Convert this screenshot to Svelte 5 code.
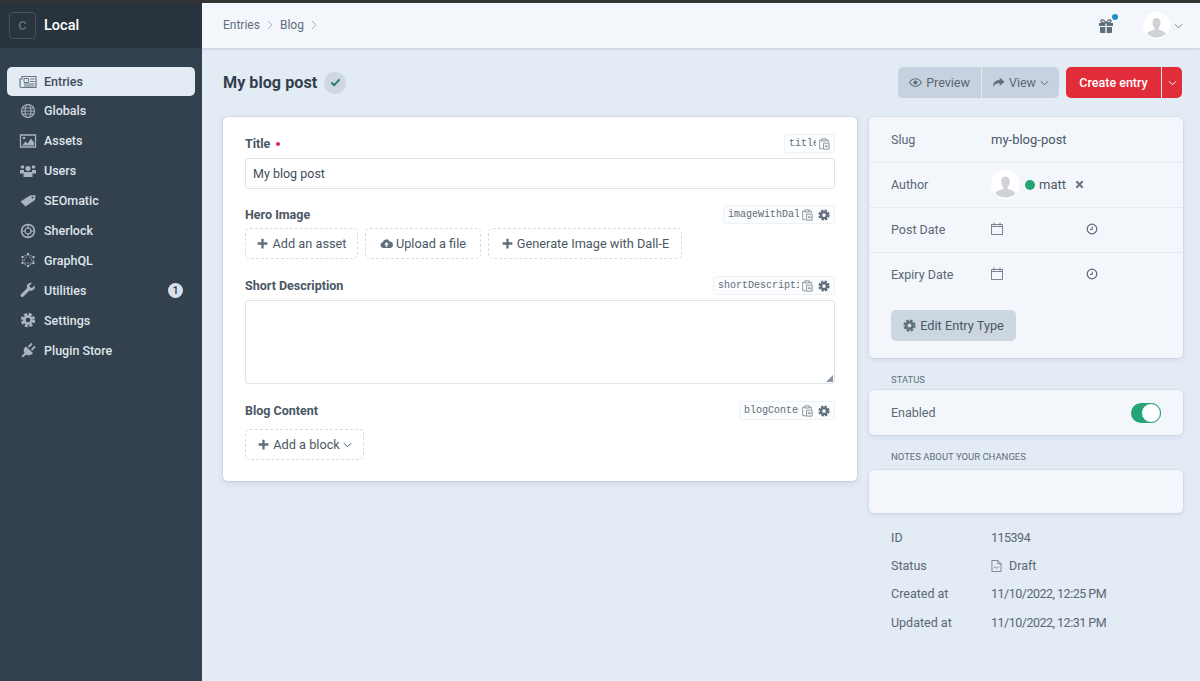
<script>
  const nav = [
    { label: 'Entries', icon: 'news', active: true },
    { label: 'Globals', icon: 'globe' },
    { label: 'Assets', icon: 'image' },
    { label: 'Users', icon: 'users' },
    { label: 'SEOmatic', icon: 'tag' },
    { label: 'Sherlock', icon: 'target' },
    { label: 'GraphQL', icon: 'graph' },
    { label: 'Utilities', icon: 'wrench', badge: 1 },
    { label: 'Settings', icon: 'cog' },
    { label: 'Plugin Store', icon: 'plug' }
  ];
  const meta = [
    { key: 'ID', value: '115394' },
    { key: 'Status', value: 'Draft', draft: true },
    { key: 'Created at', value: '11/10/2022, 12:25 PM' },
    { key: 'Updated at', value: '11/10/2022, 12:31 PM' }
  ];
</script>

{#snippet cog()}
  <svg class="i" viewBox="0 0 16 16"><circle cx="8" cy="8" r="4" fill="none" stroke="currentColor" stroke-width="3"/><circle cx="8" cy="8" r="6.2" fill="none" stroke="currentColor" stroke-width="2.6" stroke-dasharray="3.2 1.67"/></svg>
{/snippet}
{#snippet plus()}
  <svg class="i" viewBox="0 0 16 16"><path d="M6.6 2h2.8v4.6H14v2.8H9.400V14H6.600V9.400H2V6.600h4.600z" fill="currentColor"/></svg>
{/snippet}
{#snippet chevron()}
  <svg class="chev" viewBox="0 0 10 6"><path d="M1 1l4 4 4-4" fill="none" stroke="currentColor" stroke-width="1.1"/></svg>
{/snippet}
{#snippet clip()}
  <svg class="clip" viewBox="0 0 14 14"><path d="M4.500 2.500H2v10h3.500M9.500 2.500H12v2.500M4.500 1h5v2.500h-5z" fill="none" stroke="currentColor" stroke-width="1"/><path d="M6.500 6h6.500v7H6.500z" fill="none" stroke="currentColor" stroke-width="1"/><path d="M12.500 9.500H8.500M10 8L8.500 9.500 10 11" fill="none" stroke="currentColor"/></svg>
{/snippet}
{#snippet calendar()}
  <svg class="cal" viewBox="0 0 12 13"><path d="M.5 2.500h11v10H.5zM.5 4.500h11M3 .5v3M9 .5v3" fill="none" stroke="currentColor" stroke-width=".9"/></svg>
{/snippet}
{#snippet clock()}
  <svg class="clk" viewBox="0 0 12 12"><circle cx="6" cy="6" r="4.800" fill="none" stroke="currentColor" stroke-width="1.200"/><path d="M6.300 3.500v3H4" fill="none" stroke="currentColor"/></svg>
{/snippet}
{#snippet person()}
  <path d="M20 9c-4 0-6 3-6 7 0 3 1.500 6 3 7.500v2.500c-3 1.500-9 2.500-11 6 3.500 4 8.500 6 14 6s10.500-2 14-6c-2-3.500-8-4.500-11-6v-2.500c1.500-1.500 3-4.500 3-7.500 0-4-2-7-6-7z" fill="#cfd3d8"/>
{/snippet}
{#snippet navIcon(name)}
  <svg class="nav-icon" viewBox="0 0 18 16">
    {#if name === 'news'}
      <path d="M3 2.500h14v11H2.500a1.500 1.500 0 0 1-1.500-1.500V5h2z" fill="none" stroke="currentColor" stroke-width="1.200"/><path d="M5 4.500h4.500v4H5zM11 5h4.500M11 7.500h4.500M5 10h10.500M5 12h10.500" fill="none" stroke="currentColor" stroke-width="1"/>
    {:else if name === 'globe'}
      <circle cx="9" cy="8" r="6.500" fill="none" stroke="currentColor" stroke-width="1.200"/><ellipse cx="9" cy="8" rx="3" ry="6.500" fill="none" stroke="currentColor"/><path d="M2.500 8h13M3.500 5h11M3.500 11h11" stroke="currentColor" stroke-width="1"/>
    {:else if name === 'image'}
      <path d="M1.500 2h15v12h-15z" fill="none" stroke="currentColor" stroke-width="1.300"/><path d="M3 12.500l3.500-4 2 2 3.500-5 3 4v3z" fill="currentColor"/><circle cx="5" cy="5" r="1.300" fill="currentColor"/>
    {:else if name === 'users'}
      <circle cx="3.500" cy="4" r="1.800" fill="currentColor"/><circle cx="14.500" cy="4" r="1.800" fill="currentColor"/><circle cx="9" cy="5.500" r="2.500" fill="currentColor"/><path d="M1 7h4v3.500H1zM13 7h4v3.500h-4zM5.500 9h7a1 1 0 0 1 1 1v4h-9v-4a1 1 0 0 1 1-1z" fill="currentColor"/>
    {:else if name === 'tag'}
      <path d="M1.500 8.500L11 2.500l5.500-.5-.5 5-9.500 6.500z" fill="currentColor"/><circle cx="13.500" cy="4.500" r="1" fill="#33404e"/>
    {:else if name === 'target'}
      <circle cx="9" cy="8" r="6.500" fill="none" stroke="currentColor" stroke-width="1.500"/><circle cx="9" cy="8" r="3" fill="none" stroke="currentColor" stroke-width="1.200"/><path d="M9 1.500v4M9 10.500v4M2.500 8h4M11.500 8h4" stroke="currentColor" stroke-width="1.200"/>
    {:else if name === 'graph'}
      <path d="M9 2l5.500 3v6L9 14l-5.500-3V5zM9 2l5.500 9h-11z" fill="none" stroke="currentColor" stroke-width=".8" stroke-dasharray="2 1"/><circle cx="9" cy="2" r="1.200" fill="currentColor"/><circle cx="14.500" cy="5" r="1.200" fill="currentColor"/><circle cx="14.500" cy="11" r="1.200" fill="currentColor"/><circle cx="9" cy="14" r="1.200" fill="currentColor"/><circle cx="3.500" cy="11" r="1.200" fill="currentColor"/><circle cx="3.500" cy="5" r="1.200" fill="currentColor"/>
    {:else if name === 'wrench'}
      <path d="M15.500 3.500l-2.500 2.500-2-.5-.5-2L13 1c-2-.7-4.500.5-5 2.500-.2 1-.1 1.800.2 2.500L2 12.200a1.700 1.700 0 0 0 2.400 2.400L10.500 8.500c2.500.8 5-.5 5.300-3 .1-.8 0-1.500-.3-2z" fill="currentColor"/>
    {:else if name === 'cog'}
      <circle cx="9" cy="8" r="3.700" fill="none" stroke="currentColor" stroke-width="2.800"/><circle cx="9" cy="8" r="5.900" fill="none" stroke="currentColor" stroke-width="2.600" stroke-dasharray="3 1.630"/>
    {:else}
      <path d="M7 4.500l7 6.500c-2 2.500-5 3-7 1.500l-3 3-1.500-1.500 3-3c-1.500-2-1-5 1.500-6.500z" fill="currentColor"/><path d="M9.500 5l3.500-3.500M12.500 8L16 4.500" stroke="currentColor" stroke-width="1.800"/>
    {/if}
  </svg>
{/snippet}

<div class="shell">
  <aside class="side">
    <div class="brand">
      <span class="logo">C</span>
      <span class="site">Local</span>
    </div>
    <nav class="nav">
      {#each nav as item}
        <div class="nav-item" class:active={item.active}>
          {@render navIcon(item.icon)}
          <span class="nav-label">{item.label}</span>
          {#if item.badge}<span class="badge">{item.badge}</span>{/if}
        </div>
      {/each}
    </nav>
  </aside>

  <div class="page">
    <header class="topbar">
      <div class="crumbs">
        <span>Entries</span>
        <svg class="sep" viewBox="0 0 6 10"><path d="M1 1l4 4-4 4" fill="none" stroke="currentColor"/></svg>
        <span>Blog</span>
        <svg class="sep" viewBox="0 0 6 10"><path d="M1 1l4 4-4 4" fill="none" stroke="currentColor"/></svg>
      </div>
      <div class="account">
        <span class="gift">
          <svg viewBox="0 0 16 16"><path d="M1 5h6.300v3H1zM8.700 5H15v3H8.700zM2 9h5.300v6H3a1 1 0 0 1-1-1zM8.700 9H14v5a1 1 0 0 1-1 1H8.700z" fill="#606d7b"/><path d="M8 5C6 1.500 3 1 3 3c0 1.500 2.500 2 5 2zm0 0c2-3.500 5-4 5-2 0 1.500-2.500 2-5 2z" fill="none" stroke="#606d7b" stroke-width="1.400"/></svg>
          <span class="dot"></span>
        </span>
        <svg class="avatar top" viewBox="0 0 40 40"><circle cx="20" cy="20" r="20" fill="#fff"/>{@render person()}</svg>
        {@render chevron()}
      </div>
    </header>

    <div class="pagehead">
      <div class="title">
        <h1>My blog post</h1>
        <span class="saved"><svg viewBox="0 0 12 10"><path d="M1.500 5l3 3 6-6.500" fill="none" stroke="#27766b" stroke-width="2"/></svg></span>
      </div>
      <div class="actions">
        <div class="btn-group">
          <span class="gbtn preview">
            <svg class="i" viewBox="0 0 16 16"><path d="M.8 8C2.500 5 5 3.500 8 3.500S13.500 5 15.200 8C13.500 11 11 12.500 8 12.500S2.500 11 .8 8z" fill="none" stroke="currentColor" stroke-width="1.300"/><circle cx="8" cy="8" r="2.600" fill="currentColor"/></svg>
            Preview
          </span>
          <span class="gbtn view">
            <svg class="i" viewBox="0 0 16 16"><path d="M9.500 2l6 5-6 5V9C5.500 9 3 10 2 14 .5 8.500 4 5.300 9.500 5z" fill="currentColor"/></svg>
            View {@render chevron()}
          </span>
        </div>
        <div class="create">
          <span class="create-main">Create entry</span>
          <span class="create-more">{@render chevron()}</span>
        </div>
      </div>
    </div>

    <div class="columns">
      <main class="card">
        <div class="field-head">
          <span class="label">Title <i class="req"></i></span>
          <span class="handle"><code class="c-title">title</code>{@render clip()}</span>
        </div>
        <div class="input">My blog post</div>

        <div class="field-head hero">
          <span class="label">Hero Image</span>
          <span class="handle"><code class="c-hero">imageWithDallE</code>{@render clip()}{@render cog()}</span>
        </div>
        <div class="dashed-row">
          <span class="dashed w-asset">{@render plus()} Add an asset</span>
          <span class="dashed w-upload">
            <svg class="i cloud" viewBox="0 0 16 16"><path d="M4 13.500a3.500 3.500 0 0 1-.7-6.900A4.500 4.500 0 0 1 11.800 5.500 4 4 0 0 1 12 13.500zM8 6L5 9.200h2V12h2V9.200h2z" fill="currentColor" fill-rule="evenodd"/></svg>
            Upload a file
          </span>
          <span class="dashed w-dalle">{@render plus()} Generate Image with Dall-E</span>
        </div>

        <div class="field-head short">
          <span class="label">Short Description</span>
          <span class="handle"><code class="c-short">shortDescription</code>{@render clip()}{@render cog()}</span>
        </div>
        <div class="textarea">
          <svg class="grip" viewBox="0 0 8 8"><path d="M8 0v8H0z" fill="#8a94a0"/></svg>
        </div>

        <div class="field-head blog">
          <span class="label">Blog Content</span>
          <span class="handle"><code class="c-blog">blogContent</code>{@render clip()}{@render cog()}</span>
        </div>
        <div class="dashed-row">
          <span class="dashed w-block">{@render plus()} Add a block {@render chevron()}</span>
        </div>
      </main>

      <aside class="details">
        <section class="panel">
          <div class="row first"><span class="key">Slug</span><span>my-blog-post</span></div>
          <div class="row">
            <span class="key">Author</span>
            <span class="author">
              <svg class="avatar" viewBox="0 0 40 40"><circle cx="20" cy="20" r="20" fill="#fff"/>{@render person()}</svg>
              <i class="live"></i>
              <span>matt</span>
              <svg class="x" viewBox="0 0 10 10"><path d="M1.500 1.500l7 7M8.500 1.500l-7 7" stroke="currentColor" stroke-width="2.400" fill="none"/></svg>
            </span>
          </div>
          <div class="row">
            <span class="key">Post Date</span>
            <span class="dates">{@render calendar()}{@render clock()}</span>
          </div>
          <div class="row last">
            <span class="key">Expiry Date</span>
            <span class="dates">{@render calendar()}{@render clock()}</span>
          </div>
          <div class="edit-wrap"><span class="edit">{@render cog()} Edit Entry Type</span></div>
        </section>

        <div class="cap">STATUS</div>
        <section class="panel status">
          <span class="key">Enabled</span>
          <span class="toggle"><i></i></span>
        </section>

        <div class="cap notes-cap">NOTES ABOUT YOUR CHANGES</div>
        <section class="panel notes"></section>

        <dl class="meta">
          {#each meta as m}
            <div class="meta-row">
              <dt>{m.key}</dt>
              <dd>
                {#if m.draft}
                  <svg class="doc" viewBox="0 0 12 14"><path d="M1 1h6.500L11 4.500V13H1zM7.500 1v3.500H11" fill="none" stroke="currentColor" stroke-width=".9"/><path d="M3 9.500l1.500-1.500 2 1.500L9 7.500" fill="none" stroke="currentColor" stroke-width=".8"/></svg>
                {/if}
                <span class:value={!m.draft}>{m.value}</span>
              </dd>
            </div>
          {/each}
        </dl>
      </aside>
    </div>
  </div>
</div>

<style>
  :global(body) {
    margin: 0;
    background: #e3ebf5;
    font-family: Roboto, "Noto Sans", sans-serif;
    font-size: 13px;
    color: #3f4d5a;
  }
  .shell {
    display: flex;
    height: 681px;
    overflow: hidden;
    border-top: 3px solid #333;
    box-sizing: border-box;
  }
  .side {
    width: 202px;
    flex: none;
    background: #33404e;
    color: #e3e8ee;
  }
  .brand {
    height: 45px;
    background: #29333e;
    display: flex;
    align-items: center;
    padding-left: 9px;
    gap: 8px;
    box-sizing: border-box;
  }
  .logo {
    width: 25px;
    height: 25px;
    border: 1px solid #45515e;
    border-radius: 4px;
    color: #5b6773;
    font-size: 13px;
    font-weight: 700;
    display: flex;
    align-items: center;
    justify-content: center;
  }
  .site {
    color: #fff;
    font-size: 14.500px;
    font-weight: 500;
    margin-top: -1px;
  }
  .nav {
    padding: 19px 7px 0;
    display: flex;
    flex-direction: column;
  }
  .nav-item {
    height: 29.900px;
    display: flex;
    align-items: center;
    padding: 0 12px 0 12px;
    border-radius: 5px;
    gap: 7px;
    color: #dfe5eb;
    font-weight: 500;
    font-size: 12.500px;
  }
  .nav-item.active {
    height: 29.050px;
    background: #e3ebf5;
    color: #3f4d5a;
  }
  .nav-icon {
    width: 18px;
    height: 16px;
    color: #a9b4bf;
    flex: none;
  }
  .active .nav-icon {
    color: #6a7684;
  }
  .nav-label {
    flex: 1;
  }
  .badge {
    width: 15px;
    height: 15px;
    border-radius: 50%;
    background: #d8e0ea;
    color: #33404e;
    font-size: 10px;
    font-weight: 600;
    display: flex;
    align-items: center;
    justify-content: center;
  }
  .page {
    flex: 1;
    min-width: 0;
  }
  .topbar {
    height: 45px;
    background: #f3f7fc;
    box-shadow: 0 1px 2px rgba(80, 100, 130, 0.22);
    display: flex;
    align-items: center;
    justify-content: space-between;
    padding: 0 17px 0 21px;
    box-sizing: border-box;
  }
  .crumbs {
    display: flex;
    align-items: center;
    gap: 7px;
    color: #606d7b;
    font-size: 12px;
    margin-bottom: 2px;
  }
  .sep {
    width: 6px;
    height: 10px;
    color: #aab4bf;
  }
  .account {
    display: flex;
    align-items: center;
  }
  .gift {
    position: relative;
    width: 16px;
    height: 16px;
    margin-right: 29px;
  }
  .gift svg {
    display: block;
    width: 16px;
    height: 16px;
  }
  .dot {
    position: absolute;
    right: -4px;
    top: -4px;
    width: 6px;
    height: 6px;
    border-radius: 50%;
    background: #1f8fc7;
  }
  .avatar {
    width: 29px;
    height: 29px;
    flex: none;
  }
  .avatar.top {
    width: 27px;
    height: 27px;
    margin-right: 4px;
  }
  .chev {
    width: 9px;
    height: 6px;
    color: inherit;
  }
  .account .chev {
    color: #7b8794;
  }
  .pagehead {
    display: flex;
    align-items: center;
    justify-content: space-between;
    padding: 19px 18px 0 21px;
    height: 50px;
    box-sizing: border-box;
  }
  .title {
    display: flex;
    align-items: center;
    gap: 7px;
  }
  h1 {
    margin: 0;
    font-size: 16.200px;
    font-weight: 700;
    color: #33404e;
  }
  .saved {
    width: 22px;
    height: 22px;
    border-radius: 50%;
    background: #cdd8e3;
    display: flex;
    align-items: center;
    justify-content: center;
  }
  .saved svg {
    width: 11px;
    height: 9px;
  }
  .actions {
    display: flex;
    gap: 7px;
  }
  .btn-group {
    display: flex;
    gap: 1px;
  }
  .gbtn {
    height: 31px;
    background: #c6d2df;
    color: #5a6775;
    display: flex;
    align-items: center;
    justify-content: center;
    gap: 4px;
    box-sizing: border-box;
    font-size: 12.500px;
  }
  .preview {
    width: 83px;
    border-radius: 5px 0 0 5px;
  }
  .view {
    width: 77px;
    border-radius: 0 5px 5px 0;
  }
  .i {
    width: 13px;
    height: 13px;
    flex: none;
    color: #606d7b;
  }
  .create {
    display: flex;
    gap: 1px;
    color: #fff;
    font-weight: 500;
    font-size: 12.500px;
  }
  .create-main {
    width: 95px;
    height: 31px;
    background: #e12d39;
    border-radius: 5px 0 0 5px;
    display: flex;
    align-items: center;
    justify-content: center;
  }
  .create-more {
    width: 20px;
    height: 31px;
    background: #e12d39;
    border-radius: 0 5px 5px 0;
    display: flex;
    align-items: center;
    justify-content: center;
  }
  .columns {
    display: flex;
    align-items: flex-start;
    gap: 12px;
    padding: 19px 17px 0 21px;
  }
  .card {
    width: 634px;
    height: 364px;
    flex: none;
    box-sizing: border-box;
    background: #fff;
    border-radius: 5px;
    padding: 17px 22px;
    box-shadow: 0 0 0 1px rgba(60, 80, 110, 0.07), 0 2px 6px rgba(60, 80, 110, 0.12);
  }
  .field-head {
    display: flex;
    align-items: center;
    justify-content: space-between;
    height: 19px;
    margin-bottom: 5px;
  }
  .field-head.hero {
    margin-top: 16px;
    margin-bottom: 4px;
  }
  .field-head.short {
    margin-top: 17px;
    margin-bottom: 5px;
  }
  .field-head.blog {
    margin-top: 17px;
    margin-bottom: 9px;
  }
  .label {
    font-weight: 700;
    font-size: 12.500px;
    color: #4a5764;
  }
  .req {
    display: inline-block;
    width: 4px;
    height: 4px;
    border-radius: 50%;
    background: #d9304a;
    margin: 0 0 2px 3px;
  }
  .handle {
    display: flex;
    align-items: center;
    gap: 2px;
    padding: 0 4px;
    border: 1px solid #eef1f5;
    border-radius: 3px;
    background: #fbfcfd;
    color: #606d7b;
    box-sizing: content-box;
    height: 17px;
  }
  code {
    font-family: "Liberation Mono", monospace;
    font-size: 10px;
    overflow: hidden;
    white-space: nowrap;
    display: block;
  }
  .c-title { width: 27px; }
  .c-hero { width: 71px; }
  .c-short { width: 81px; }
  .c-blog { width: 55px; }
  .clip {
    width: 12px;
    height: 12px;
    color: #7b8794;
  }
  .handle .i {
    width: 12px;
    height: 12px;
    margin-left: 3px;
  }
  .input {
    height: 31px;
    box-sizing: border-box;
    border: 1px solid #dfe4ea;
    border-radius: 3px;
    padding: 0 7px;
    display: flex;
    align-items: center;
    font-size: 12.500px;
    color: #3f4d5a;
  }
  .dashed-row {
    display: flex;
    gap: 7px;
  }
  .dashed {
    height: 31px;
    box-sizing: border-box;
    border: 1px dashed #d8dde3;
    border-radius: 5px;
    display: flex;
    align-items: center;
    justify-content: center;
    gap: 3px;
    font-size: 12.750px;
    color: #4a5764;
  }
  .w-asset { width: 113px; }
  .w-upload { width: 116px; }
  .w-dalle { width: 194px; }
  .w-block { width: 119px; }
  .textarea {
    height: 84px;
    box-sizing: border-box;
    border: 1px solid #dfe4ea;
    border-radius: 3px;
    position: relative;
  }
  .grip {
    position: absolute;
    right: 1px;
    bottom: 1px;
    width: 7px;
    height: 7px;
  }
  .details {
    width: 314px;
    flex: none;
  }
  .panel {
    background: #f3f7fc;
    border-radius: 5px;
    box-shadow: 0 0 0 1px rgba(60, 80, 110, 0.05), 0 2px 5px rgba(60, 80, 110, 0.1);
  }
  .row {
    height: 45px;
    display: flex;
    align-items: center;
    padding: 0 22px 1px;
    border-bottom: 1px solid #e6ecf3;
    box-sizing: border-box;
    font-size: 13px;
    color: #4a5764;
  }
  .row.first {
    height: 46px;
  }
  .row.last {
    border-bottom: 0;
    padding-bottom: 2px;
  }
  .key {
    width: 100px;
    flex: none;
    color: #5a6775;
    font-size: 12.500px;
  }
  .author {
    display: flex;
    align-items: center;
  }
  .live {
    width: 10px;
    height: 10px;
    border-radius: 50%;
    background: #27a378;
    margin: 0 4px 0 5px;
  }
  .x {
    width: 9px;
    height: 9px;
    margin-left: 9px;
    color: #6a7684;
  }
  .dates {
    display: flex;
    align-items: center;
    margin-top: -2px;
  }
  .cal {
    width: 12px;
    height: 13px;
    color: #6a7684;
    margin-right: 83px;
  }
  .clk {
    width: 12px;
    height: 12px;
    color: #5a6775;
  }
  .edit-wrap {
    padding: 12px 22px 17px;
  }
  .edit {
    width: 125px;
    height: 31px;
    background: #ccd6e1;
    border-radius: 5px;
    display: flex;
    align-items: center;
    justify-content: center;
    gap: 4px;
    font-size: 12.750px;
    color: #4a5764;
  }
  .cap {
    padding: 15px 22px 4px;
    font-size: 9.500px;
    line-height: 13px;
    color: #606d7b;
  }
  .notes-cap {
    padding-top: 15px;
    padding-bottom: 7px;
  }
  .status {
    height: 45px;
    display: flex;
    align-items: center;
    justify-content: space-between;
    padding: 0 22px;
  }
  .toggle {
    width: 30px;
    height: 20px;
    border-radius: 10px;
    background: #27a378;
    position: relative;
    display: block;
    box-sizing: border-box;
  }
  .toggle i {
    position: absolute;
    right: 0;
    top: 0;
    width: 20px;
    height: 20px;
    box-sizing: border-box;
    border: 1px solid #27a378;
    border-radius: 50%;
    background: #fff;
  }
  .notes {
    height: 43px;
  }
  .meta {
    margin: 10px 0 0;
    padding: 0 22px;
  }
  .meta-row {
    display: flex;
    height: 28.400px;
    align-items: center;
    font-size: 12.500px;
    color: #5a6775;
  }
  dt {
    width: 100px;
  }
  dd {
    margin: 0;
    display: flex;
    align-items: center;
    gap: 7px;
  }
  .value {
    letter-spacing: -0.5px;
  }
  .doc {
    width: 11px;
    height: 14px;
    color: #6a7684;
  }
</style>
